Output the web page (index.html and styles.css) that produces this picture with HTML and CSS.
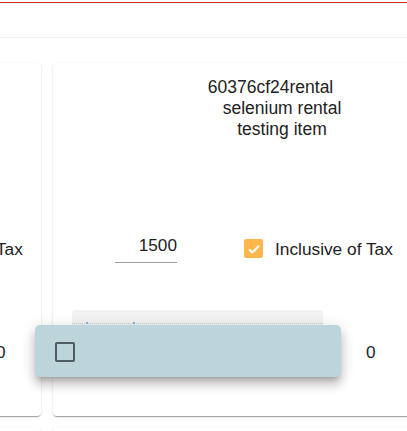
FILE: index.html
```html
<!DOCTYPE html>
<html>
<head>
<meta charset="utf-8">
<link rel="stylesheet" href="styles.css">
</head>
<body>
<div class="topbar"><div class="redline"></div></div>
<div class="board">
  <div class="row">
    <div class="card">
      <div class="title empty"></div>
      <div class="fields">
        <div class="input"></div>
        <div class="check">
          <span class="box on"><svg viewBox="0 0 18 18" width="18" height="18"><path d="M4 9.3l3.2 3.2L14 5.7" fill="none" stroke="#fff" stroke-width="2"/></svg></span>
          <span class="label">Inclusive of Tax</span>
        </div>
      </div>
      <div class="bottom">
        <div class="grey"><div class="dots"><i></i><i class="b2"></i></div></div>
        <div class="zero">0</div>
      </div>
    </div>
    <div class="card">
      <div class="title">
        <span class="l1">60376cf24rental</span>
        <span>selenium rental</span>
        <span>testing item</span>
      </div>
      <div class="fields">
        <div class="input">1500</div>
        <div class="check">
          <span class="box on"><svg viewBox="0 0 18 18" width="18" height="18"><path d="M4 9.3l3.2 3.2L14 5.7" fill="none" stroke="#fff" stroke-width="2"/></svg></span>
          <span class="label">Inclusive of Tax</span>
        </div>
      </div>
      <div class="bottom">
        <div class="grey"><div class="dots"><i></i><i class="b2"></i></div></div>
        <div class="zero">0</div>
      </div>
    </div>
  </div>
  <div class="row">
    <div class="card"></div>
    <div class="card"></div>
  </div>
</div>
<div class="preview"><span class="box off"></span></div>
</body>
</html>
```
FILE: styles.css
```css
html, body {
  margin: 0;
  padding: 0;
  width: 407px;
  height: 431px;
  overflow: hidden;
  background: #fff;
  font-family: "Liberation Sans", Arial, sans-serif;
  color: #222;
}
.topbar {
  height: 35px;
  padding-top: 2px;
  border-bottom: 1px solid #f1f1f1;
}
.redline {
  height: 1px;
  background: #cc2b2b;
}
.board {
  margin-top: 25px;
  margin-left: -317px;
  display: flex;
  flex-direction: column;
  gap: 12px;
}
.row {
  display: flex;
  gap: 12px;
}
.card {
  flex: 0 0 358px;
  height: 339px;
  padding-top: 14px;
  background: #fff;
  border-radius: 4px;
  box-shadow: 0 2px 1px -1px rgba(0,0,0,.2), 0 1px 1px 0 rgba(0,0,0,.14), 0 1px 3px 0 rgba(0,0,0,.12);
}
.title {
  margin-left: 129px;
  width: 200px;
  text-align: center;
  font-size: 17.5px;
  line-height: 21px;
}
.title.empty { height: 63px; }
.title span { display: block; }
.title .l1 { margin-right: 23px; }
.fields {
  display: flex;
  align-items: flex-start;
  margin-top: 95px;
}
.input {
  margin-left: 62px;
  width: 62px;
  height: 21px;
  text-align: right;
  font-size: 17.2px;
  line-height: 21px;
  padding-bottom: 6px;
  border-bottom: 1px solid #a29e9a;
}
.check {
  display: flex;
  align-items: flex-start;
  margin-left: 67px;
  margin-top: 4px;
}
.box {
  width: 19px;
  height: 19px;
  box-sizing: border-box;
  border-radius: 2px;
  display: flex;
  align-items: center;
  justify-content: center;
}
.box.on { background: #ffb74d; }
.label {
  margin-left: 12px;
  font-size: 17.3px;
  line-height: 21px;
}
.bottom {
  display: flex;
  align-items: flex-start;
  margin-top: 47px;
}
.grey {
  margin-left: 19px;
  width: 251px;
  height: 62px;
  background: #f2f2f2;
  border-radius: 4px 4px 0 0;
  padding-top: 13px;
  box-sizing: border-box;
}
.dots {
  display: flex;
  border-top: 1px dotted #d2d2d2;
  padding-left: 14px;
}
.dots i {
  display: block;
  width: 2px;
  height: 2px;
  margin-top: -2px;
  background: #7fb5ea;
}
.dots i.b2 { margin-left: 45px; }
.zero {
  margin-left: 43px;
  margin-top: 32px;
  font-size: 17.2px;
  line-height: 21px;
}
.preview {
  position: absolute;
  left: 35px;
  top: 325px;
  width: 306px;
  height: 52px;
  box-sizing: border-box;
  padding: 17px 0 0 20px;
  background: #bcd5da;
  border-radius: 5px;
  box-shadow: 0 5px 5px -3px rgba(0,0,0,.2), 0 8px 10px 1px rgba(0,0,0,.14), 0 3px 14px 2px rgba(0,0,0,.12);
}
.box.off {
  width: 20px;
  height: 20px;
  border: 2px solid #505b5f;
}
```
